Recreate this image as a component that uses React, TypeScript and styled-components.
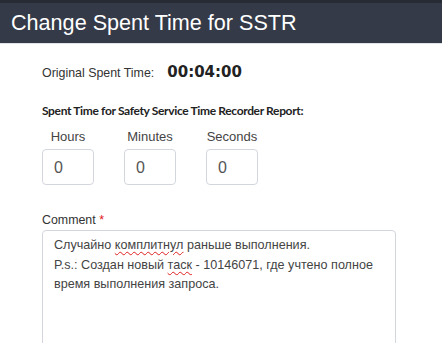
import React from 'react'
import styled, { createGlobalStyle } from 'styled-components'

const GlobalStyle = createGlobalStyle`
  html, body {
    margin: 0;
    padding: 0;
    background: #ffffff;
    font-family: 'Liberation Sans', Arial, sans-serif;
  }
`

const Page = styled.div`
  width: 442px;
  height: 343px;
  overflow: hidden;
  background: #ffffff;
`

const Header = styled.div`
  height: 40px;
  border-top: 3px solid #272b33;
  border-bottom: 1px solid #dfe2e6;
  background: #343a47;
  display: flex;
  align-items: center;
  padding-left: 11px;
  color: #ffffff;
  font-size: 21.6px;
`

const Body = styled.div`
  padding: 0 46px 0 42px;
  color: #333333;
`

const OriginalRow = styled.div`
  display: flex;
  align-items: baseline;
  gap: 13px;
  margin-top: 19px;
  font-size: 12.4px;
`

const Duration = styled.span`
  font-family: 'DejaVu Sans', Verdana, sans-serif;
  font-size: 15px;
  font-weight: bold;
  color: #222222;
`

const SectionTitle = styled.div`
  margin-top: 22px;
  font-family: Lato, 'Liberation Sans', sans-serif;
  font-size: 12px;
  line-height: 15px;
  letter-spacing: -0.35px;
  font-weight: bold;
  color: #222222;
`

const TimeRow = styled.div`
  display: flex;
  gap: 30px;
  margin-top: 11px;
`

const TimeField = styled.div`
  display: flex;
  flex-direction: column;
  align-items: center;
  gap: 5px;
  font-size: 13px;
  line-height: 15px;
  color: #444444;
`

const TimeInput = styled.div`
  box-sizing: border-box;
  width: 52px;
  height: 36px;
  border: 1px solid #d3d7dd;
  border-radius: 4px;
  display: flex;
  align-items: center;
  padding-left: 11px;
  font-size: 16px;
  color: #555555;
`

const CommentLabel = styled.div`
  margin-top: 28px;
  font-size: 12.4px;
  line-height: 14px;
  color: #333333;
`

const Required = styled.span`
  color: #e02020;
`

const TextArea = styled.div`
  margin-top: 3px;
  height: 140px;
  border: 1px solid #d3d7dd;
  border-radius: 4px;
  padding: 5px 11px;
  font-size: 12.6px;
  line-height: 19.5px;
  color: #444444;
`

const Misspelled = styled.span`
  text-decoration: underline wavy #e02020;
  text-decoration-thickness: 1px;
  text-underline-offset: 2px;
`

export default function App() {
  const fields = ['Hours', 'Minutes', 'Seconds']
  return (
    <Page>
      <GlobalStyle />
      <Header>Change Spent Time for SSTR</Header>
      <Body>
        <OriginalRow>
          <span>Original Spent Time:</span>
          <Duration>00:04:00</Duration>
        </OriginalRow>
        <SectionTitle>Spent Time for Safety Service Time Recorder Report:</SectionTitle>
        <TimeRow>
          {fields.map((f) => (
            <TimeField key={f}>
              <span>{f}</span>
              <TimeInput>0</TimeInput>
            </TimeField>
          ))}
        </TimeRow>
        <CommentLabel>
          Comment <Required>*</Required>
        </CommentLabel>
        <TextArea>
          Случайно <Misspelled>комплитнул</Misspelled> раньше выполнения.
          <br />
          P.s.: Создан новый <Misspelled>таск</Misspelled> - 10146071, где учтено полное время выполнения запроса.
        </TextArea>
      </Body>
    </Page>
  )
}
